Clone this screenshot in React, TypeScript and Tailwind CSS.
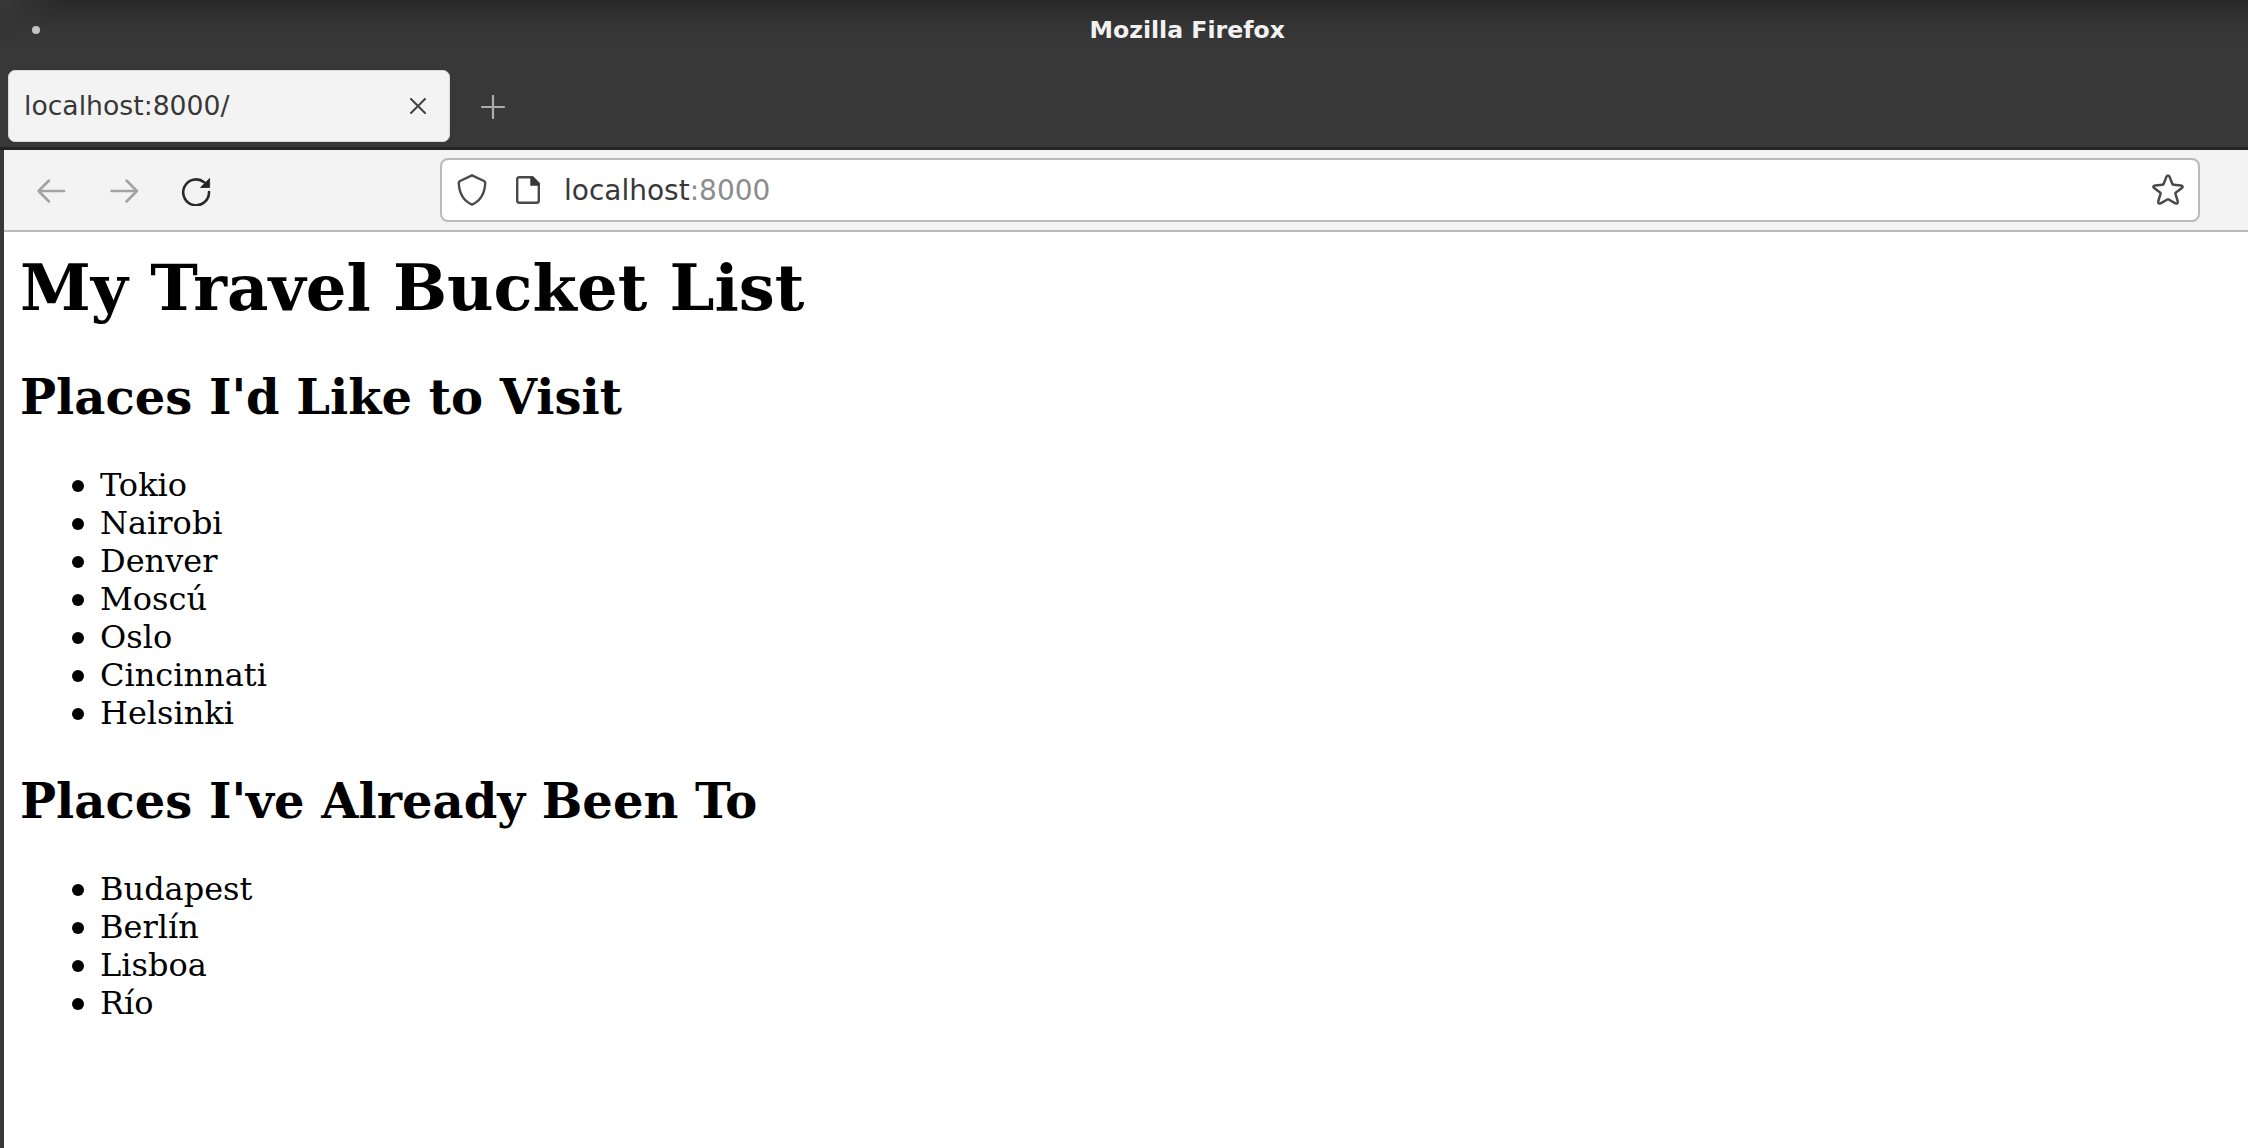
import React from "react";

const wanted = ["Tokio", "Nairobi", "Denver", "Moscú", "Oslo", "Cincinnati", "Helsinki"];
const visited = ["Budapest", "Berlín", "Lisboa", "Río"];

function PlaceList({ items }: { items: string[] }) {
  return (
    <ul className="mt-[41px] pl-[52px]">
      {items.map((item) => (
        <li key={item} className="flex h-[38px] items-start text-[32px] leading-[38px]">
          <span className="mt-[14px] mr-[16px] h-[12px] w-[12px] shrink-0 rounded-full bg-black" />
          {item}
        </li>
      ))}
    </ul>
  );
}

export default function App() {
  return (
    <div className="flex h-[1148px] w-[2248px] flex-col overflow-hidden bg-[#383838] font-['DejaVu_Sans',sans-serif]">
      <header className="h-[70px] shrink-0 bg-[radial-gradient(ellipse_60px_46px_at_0_0,#383838_0%,transparent_100%),linear-gradient(to_bottom,#292929_0px,#2d2d2d_10px,#343434_25px,#383838_46px)]">
        <div className="flex h-[60px] items-center pl-[32px]">
          <span className="h-2 w-2 rounded-full bg-[#c4c4c4]" />
          <h1 className="ml-[1049.5px] text-[23.6px] leading-[28px] font-bold text-[#f2f2f2]">Mozilla Firefox</h1>
        </div>
      </header>

      <div className="flex h-[77px] shrink-0 items-start pl-2">
        <div className="flex h-[72px] w-[442px] items-center justify-between rounded-[7px] border border-[#d8d8d8] bg-[#f3f3f3] pr-[23px] pl-[15px]">
          <span className="text-[26.67px] leading-[32px] text-[#383838]">localhost:8000/</span>
          <svg width="16" height="16" viewBox="0 0 16 16" fill="none" stroke="#424242" strokeWidth="2" strokeLinecap="round">
            <path d="M1 1l14 14M15 1L1 15" />
          </svg>
        </div>
        <svg className="mt-[25px] ml-[31px]" width="24" height="24" viewBox="0 0 24 24" fill="none" stroke="#adadad" strokeWidth="2.2" strokeLinecap="round">
          <path d="M12 1v22M1 12h22" />
        </svg>
      </div>

      <div className="h-[3px] shrink-0 bg-[#242424]" />

      <div className="flex min-h-0 flex-1 flex-col pl-[4px]">
        <nav className="flex h-[82px] shrink-0 items-center border-b-2 border-[#bababa] bg-[#f3f3f3]">
          <svg className="ml-[32px]" width="32" height="32" viewBox="0 0 32 32" fill="none" stroke="#a3a3a3" strokeWidth="2.5" strokeLinecap="round" strokeLinejoin="round">
            <path d="M28 17H2.500M13 6.500L2.500 17 13 27.500" />
          </svg>
          <svg className="ml-[40px]" width="32" height="32" viewBox="0 0 32 32" fill="none" stroke="#a3a3a3" strokeWidth="2.5" strokeLinecap="round" strokeLinejoin="round">
            <path d="M3.500 17h25.500M18.500 6.500L29 17 18.500 27.500" />
          </svg>
          <svg className="ml-[40px]" width="32" height="32" viewBox="0 0 32 32" fill="none">
            <path d="M29 18A12.900 12.900 0 1 1 24.2 8.300" stroke="#292929" strokeWidth="2.6" strokeLinecap="round" />
            <path d="M29.600 4.500V13.500H20.500z" fill="#222" stroke="#222" strokeWidth="0.8" strokeLinejoin="round" />
          </svg>

          <div className="ml-[228px] flex h-[64px] w-[1760px] items-center rounded-[8px] border-2 border-[#bababa] bg-white">
            <svg className="ml-[14px]" width="32" height="32" viewBox="0 0 32 32" fill="none" stroke="#4a4a4a" strokeWidth="2.4" strokeLinejoin="round">
              <path d="M16 1.300L28 7Q29.400 7.800 29.200 9.500C28.700 18.500 25.500 26.500 16 30.600C6.500 26.500 3.300 18.500 2.800 9.500Q2.600 7.800 4 7z" />
            </svg>
            <svg className="ml-[24px]" width="32" height="32" viewBox="0 0 32 32" fill="none">
              <path d="M7.200 3.200H20.500L26.800 9.500V26.500q0 2.300-2.300 2.300H7.500q-2.300 0-2.300-2.300V5.500q0-2.300 2-2.300z" stroke="#4a4a4a" strokeWidth="2.400" strokeLinejoin="round" />
              <path d="M18.300 3V11.700H27.500V9.500L21 3z" fill="#383838" />
            </svg>
            <span className="mt-[2px] ml-[20px] flex-1 text-[28px] leading-[36px] text-[#8c8c8c]">
              <span className="text-[#383838]">localhost</span>:8000
            </span>
            <svg className="mr-[14px]" width="32" height="32" viewBox="0 0 32 32" fill="none" stroke="#4a4a4a" strokeWidth="2.500" strokeLinejoin="round">
              <path d="M14.500 2.600Q16 .2 17.500 2.600L20.300 9.800Q20.600 10.600 21.500 10.700L29 11.400Q31.700 12 29.900 14L23.900 18.500Q23.200 19 23.500 20L25.700 27.200Q26 30.300 23.400 29.400L16.700 25.500Q16 25.100 15.300 25.500L8.600 29.400Q6 30.300 6.300 27.200L8.500 20Q8.800 19 8.100 18.500L2.100 14Q.3 12 3 11.400L10.500 10.700Q11.400 10.600 11.700 9.800z" />
            </svg>
          </div>
        </nav>

        <main className="flex-1 bg-white pt-[18px] pl-4 font-['DejaVu_Serif',serif] text-black">
          <h1 className="text-[64px] leading-[76px] font-bold">My Travel Bucket List</h1>
          <h2 className="mt-[43px] text-[48px] leading-[56px] font-bold">Places I'd Like to Visit</h2>
          <PlaceList items={wanted} />
          <h2 className="mt-[41px] text-[48px] leading-[56px] font-bold">Places I've Already Been To</h2>
          <PlaceList items={visited} />
        </main>
      </div>
    </div>
  );
}
